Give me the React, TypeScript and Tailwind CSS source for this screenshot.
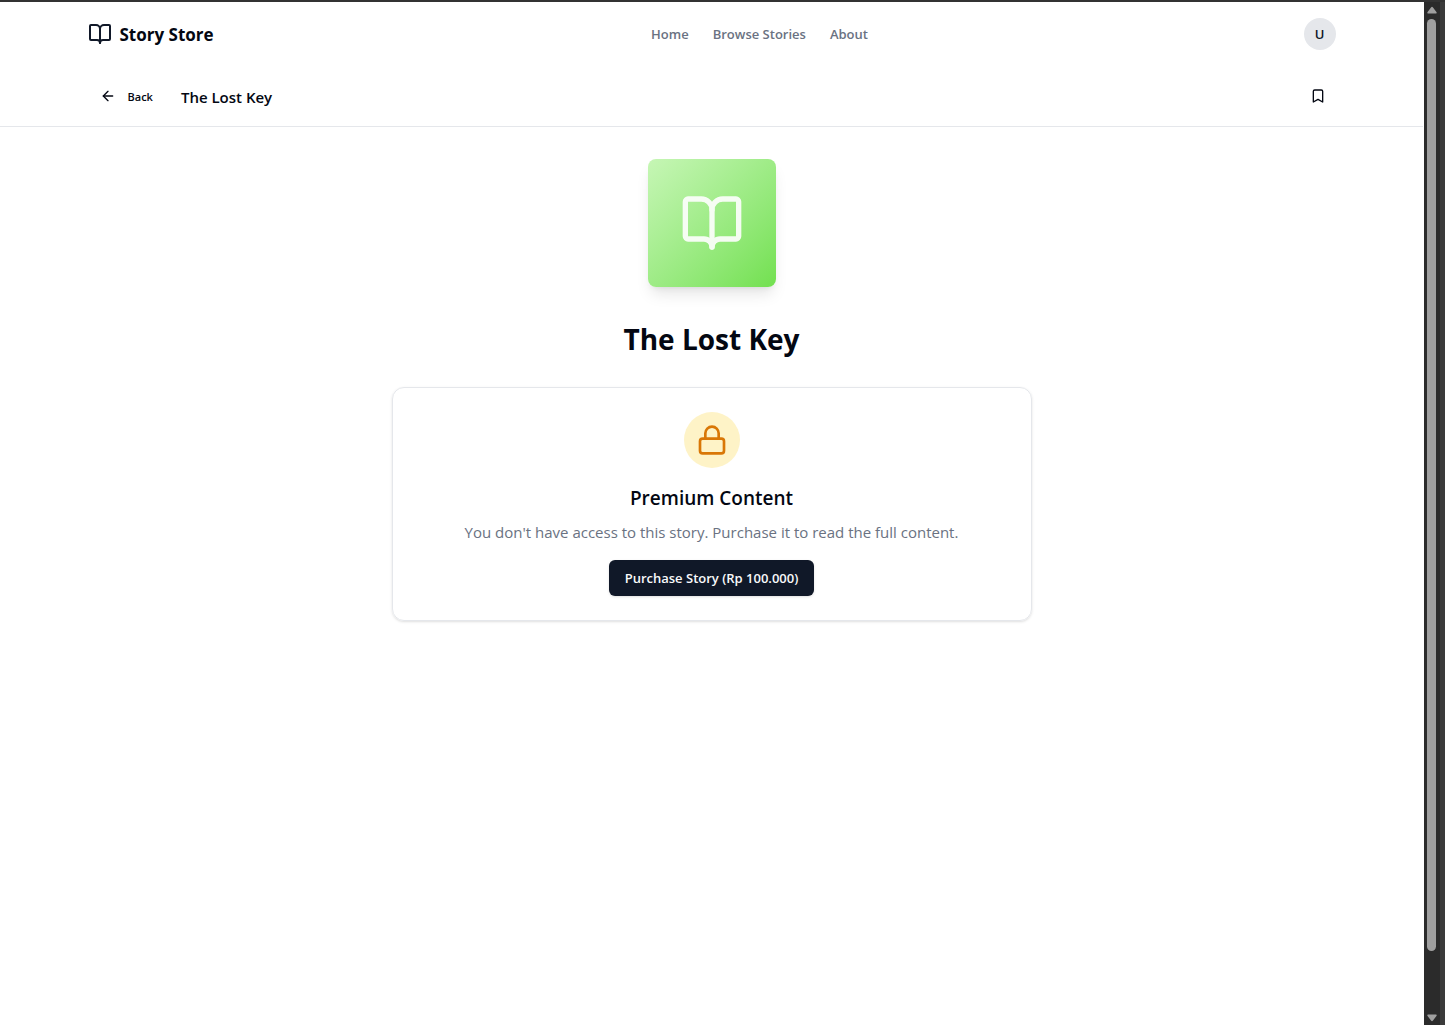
import { ArrowLeft, BookOpen, Bookmark, Lock } from "lucide-react";

const links = ["Home", "Browse Stories", "About"];

function Header() {
  return (
    <header className="mx-auto grid h-16 w-full max-w-7xl grid-cols-[1fr_auto_1fr] items-center px-4">
      <a href="#home" className="flex items-center gap-2 text-[17px] font-bold">
        <BookOpen className="size-6 text-gray-900" />
        <span className="pt-0.5">Story Store</span>
      </a>
      <nav className="ml-24 flex gap-6 pt-0.5 text-[13px] font-semibold text-gray-500">
        {links.map((label) => (
          <a key={label} href={"#" + label}>
            {label}
          </a>
        ))}
      </nav>
      <button className="size-8 justify-self-end rounded-full bg-[#e5e7eb] pt-0.5 text-[13px] font-semibold text-gray-900">
        U
      </button>
    </header>
  );
}

function StoryBar() {
  return (
    <div className="border-b border-gray-200">
      <div className="mx-auto flex w-full max-w-7xl items-center justify-between px-4 py-3">
        <div className="flex items-center gap-4">
          <button className="flex h-9 items-center gap-3 px-3 text-[11px] font-semibold">
            <ArrowLeft className="size-4" />
            <span className="pt-0.5">Back</span>
          </button>
          <span className="pt-0.5 text-[15px] font-semibold">The Lost Key</span>
        </div>
        <button aria-label="Bookmark" className="flex size-9 items-center justify-center">
          <Bookmark className="size-4" />
        </button>
      </div>
    </div>
  );
}

function Scrollbar() {
  return (
    <div aria-hidden="true" className="flex w-[21px] shrink-0 border-r-[5px] border-[#3b3b3b] bg-[#2b2b2b]">
      <div className="flex w-[15px] flex-col items-center gap-1 pt-1 pb-[3px]">
        <svg viewBox="0 0 10 8" className="mb-px h-2 w-[10px] shrink-0 fill-[#9f9f9f]">
          <path d="M4 1.4Q5 0 6 1.4L9.6 6.2Q10 7.5 9 7.5H1Q0 7.5.4 6.2Z" />
        </svg>
        <div className="w-[9px] grow-[942] rounded-full bg-[#9f9f9f]" />
        <div className="grow-[56]" />
        <svg viewBox="0 0 10 8" className="h-2 w-[10px] shrink-0 fill-[#9f9f9f]">
          <path d="M4 6.6Q5 8 6 6.6L9.6 1.8Q10 .5 9 .5H1Q0 .5.4 1.8Z" />
        </svg>
      </div>
    </div>
  );
}

export default function App() {
  return (
    <div className="flex min-h-screen flex-col bg-white font-['Open_Sans','Noto_Sans',sans-serif] text-gray-950">
      <div className="h-0.5 bg-[#333333]" />
      <div className="flex grow">
        <div className="min-w-0 grow pr-px">
          <Header />
          <StoryBar />
          <main className="mx-auto flex w-full max-w-2xl flex-col items-center px-4 py-8">
            <div className="flex size-32 items-center justify-center rounded-lg bg-linear-to-br from-[#c6f6b5] to-[#72e04f] shadow-lg">
              <BookOpen className="size-16 text-white opacity-90" />
            </div>
            <h1 className="mt-8 text-[28px] leading-10 font-bold">The Lost Key</h1>
            <section className="mt-7 flex w-full flex-col items-center rounded-xl border border-gray-200 p-6 text-center shadow-sm">
              <div className="flex size-14 items-center justify-center rounded-full bg-[#fef3c7]">
                <Lock className="size-8 text-[#d97706]" />
              </div>
              <h2 className="mt-4 text-[19px] leading-7 font-semibold">Premium Content</h2>
              <p className="mt-2 text-[15px] leading-6 text-gray-500">
                You don't have access to this story. Purchase it to read the full content.
              </p>
              <button className="mt-4 h-9 rounded-md bg-gray-900 px-4 pt-0.5 text-[13px] font-semibold text-gray-50 shadow-sm">
                Purchase Story (Rp 100.000)
              </button>
            </section>
          </main>
        </div>
        <Scrollbar />
      </div>
    </div>
  );
}
